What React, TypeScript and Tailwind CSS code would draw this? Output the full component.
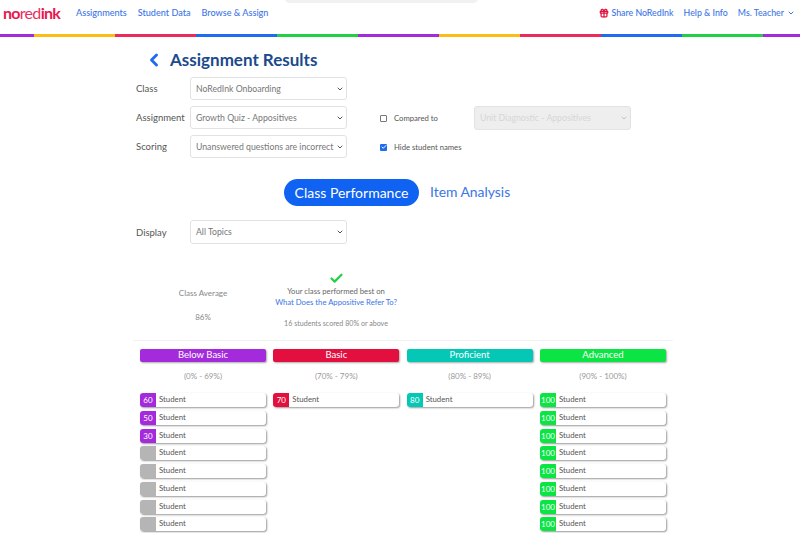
import { ChevronLeft, ChevronDown, Check, Gift } from 'lucide-react';

const FONT = "font-['Lato','Open_Sans',sans-serif]";

const STRIPES = [
  { w: 'w-[34px]', c: 'bg-[#a32bdc]' },
  { w: 'w-[81px]', c: 'bg-[#fbbd14]' },
  { w: 'w-[81px]', c: 'bg-[#ec2a5c]' },
  { w: 'w-[81px]', c: 'bg-[#1f6cf0]' },
  { w: 'w-[81px]', c: 'bg-[#22d045]' },
  { w: 'w-[81px]', c: 'bg-[#a32bdc]' },
  { w: 'w-[81px]', c: 'bg-[#fbbd14]' },
  { w: 'w-[81px]', c: 'bg-[#ec2a5c]' },
  { w: 'w-[81px]', c: 'bg-[#1f6cf0]' },
  { w: 'w-[81px]', c: 'bg-[#22d045]' },
  { w: 'w-[37px]', c: 'bg-[#a32bdc]' },
];

function Select({ value, disabled = false, className = '' }: { value: string; disabled?: boolean; className?: string }) {
  return (
    <div
      className={`flex h-[23px] items-center justify-between rounded-[3px] border border-[#e2e2e2] pl-[5px] pr-[2px] text-[8.7px] ${
        disabled ? 'bg-[#efeeef] text-[#d6d6d6]' : 'bg-white text-[#777]'
      } ${className}`}
    >
      <span className="whitespace-nowrap">{value}</span>
      <ChevronDown size={8} strokeWidth={3} className={disabled ? 'text-[#c4c4c4]' : 'text-[#555]'} />
    </div>
  );
}

function StudentRow({ score, color }: { score?: number; color: string }) {
  return (
    <div className="flex h-[14px] w-[126px] items-stretch rounded-[3px] bg-white shadow-[1px_1px_2px_#999]">
      <div className={`flex w-[16px] shrink-0 items-center justify-center rounded-l-[3px] text-[8px] text-white ${color}`}>
        {score}
      </div>
      <div className="flex items-center pl-[3px] text-[7.8px] text-[#555]">Student</div>
    </div>
  );
}

const COLUMNS = [
  {
    name: 'Below Basic',
    range: '(0% - 69%)',
    bar: 'bg-[#a32bdc]',
    rows: [
      { s: 60, c: 'bg-[#a32bdc]' },
      { s: 50, c: 'bg-[#a32bdc]' },
      { s: 30, c: 'bg-[#a32bdc]' },
      { c: 'bg-[#b5b5b5]' },
      { c: 'bg-[#b5b5b5]' },
      { c: 'bg-[#b5b5b5]' },
      { c: 'bg-[#b5b5b5]' },
      { c: 'bg-[#b5b5b5]' },
    ],
  },
  { name: 'Basic', range: '(70% - 79%)', bar: 'bg-[#e3103f]', rows: [{ s: 70, c: 'bg-[#e3103f]' }] },
  { name: 'Proficient', range: '(80% - 89%)', bar: 'bg-[#04c8b5]', rows: [{ s: 80, c: 'bg-[#04c8b5]' }] },
  {
    name: 'Advanced',
    range: '(90% - 100%)',
    bar: 'bg-[#0be443]',
    rows: Array.from({ length: 8 }, () => ({ s: 100, c: 'bg-[#0be443]' })),
  },
];

export default function App() {
  return (
    <div className={`relative h-[533px] w-[800px] overflow-hidden bg-white ${FONT}`}>
      {/* faint thing peeking in from the top */}
      <div className="absolute left-[285px] top-[-6px] h-[9px] w-[193px] rounded-full bg-[#f1f1f1]" />

      <header className="flex h-[34px] items-center justify-between pb-[9px] pl-[3px] pr-[5px] text-[9.1px] font-medium text-[#3b75e6]">
        <div className="flex items-center">
          <div className="w-[73px] text-[16px] font-bold leading-none tracking-[-0.7px] text-[#e8184f]">
            no<span className="font-normal text-[#e8305f]">red</span>ink
          </div>
          <nav className="flex gap-[11px]">
            <span>Assignments</span>
            <span>Student Data</span>
            <span>Browse &amp; Assign</span>
          </nav>
        </div>
        <div className="flex items-center gap-[10px] text-[8.8px]">
          <span className="flex items-center gap-[2px]">
            <Gift size={10} strokeWidth={3} className="text-[#e3103f]" />
            Share NoRedInk
          </span>
          <span>Help &amp; Info</span>
          <span className="flex items-center gap-[3px]">
            Ms. Teacher
            <ChevronDown size={8} strokeWidth={3} />
          </span>
        </div>
      </header>
      <div className="flex h-[3px]">
        {STRIPES.map((s, i) => (
          <div key={i} className={`${s.w} ${s.c}`} />
        ))}
      </div>

      <main className="pl-[136px]">
        <div className="mt-[11px] flex h-[24px] items-center pl-[11px]">
          <ChevronLeft size={20} strokeWidth={3.5} className="ml-[-3px] text-[#1f6cf0]" />
          <h1 className="ml-[6px] text-[17px] font-bold text-[#1b4a8c]">Assignment Results</h1>
        </div>

        <div className="mt-[5px] flex">
          <div className="flex w-[211px] flex-col gap-[6px]">
            {[
              ['Class', 'NoRedInk Onboarding'],
              ['Assignment', 'Growth Quiz - Appositives'],
              ['Scoring', 'Unanswered questions are incorrect'],
            ].map(([label, value]) => (
              <div key={label} className="flex items-center">
                <span className="w-[54px] pt-[2px] text-[9.5px] text-[#555]">{label}</span>
                <Select value={value} className="w-[157px]" />
              </div>
            ))}
          </div>
          <div className="ml-[33px] mt-[35px] flex flex-col gap-[17px] text-[7.7px] text-[#555]">
            <div className="flex h-[12px] items-center">
              <span className="h-[7px] w-[7px] rounded-[1px] border border-[#777] bg-white" />
              <span className="ml-[7px] w-[80px] pt-[2px]">Compared to</span>
              <Select value="Unit Diagnostic - Appositives" disabled className="h-[24px] w-[157px]" />
            </div>
            <div className="flex h-[12px] items-center">
              <span className="flex h-[7px] w-[7px] items-center justify-center rounded-[1px] bg-[#1f6cf0]">
                <Check size={6} strokeWidth={4} className="text-white" />
              </span>
              <span className="ml-[7px] pt-[2px]">Hide student names</span>
            </div>
          </div>
        </div>

        <div className="mt-[21px] flex items-center pl-[148px]">
          <div className="flex h-[27px] w-[135px] items-center justify-center rounded-full bg-[#0f62f2] text-[14px] text-white">
            Class Performance
          </div>
          <span className="ml-[11px] text-[13.9px] text-[#3b75e6]">Item Analysis</span>
        </div>

        <div className="mt-[14px] flex items-center">
          <span className="w-[54px] pt-[2px] text-[9.5px] text-[#555]">Display</span>
          <Select value="All Topics" className="h-[24px] w-[157px]" />
        </div>
      </main>

      <section className="ml-[133px] mt-[26px] flex h-[71px] w-[540px] border-b border-[#f2f2f2] text-[8px] leading-[11px] text-[#888]">
        <div className="flex w-[140px] flex-col items-center pt-[18px] text-center">
          <span>Class Average</span>
          <span className="mt-[13px]">86%</span>
        </div>
        <div className="ml-[-15px] flex w-[156px] flex-col items-center pt-[1px] text-center">
          <Check size={15} strokeWidth={3.5} className="text-[#22d045]" />
          <span className="text-[7.7px] text-[#666]">Your class performed best on</span>
          <span className="text-[7.7px] text-[#3b75e6]">What Does the Appositive Refer To?</span>
          <span className="mt-[10px] text-[7.1px]">16 students scored 80% or above</span>
        </div>
      </section>

      <section className="ml-[140px] mt-[8px] flex gap-[7.33px]">
        {COLUMNS.map(col => (
          <div key={col.name} className="flex w-[126px] flex-col">
            <div className={`flex h-[13px] items-center justify-center rounded-[2px] text-[9.5px] text-white shadow-[1px_1px_2px_#aaa] ${col.bar}`}>
              {col.name}
            </div>
            <div className="mt-[8px] text-center text-[8px] text-[#999]">{col.range}</div>
            <div className="mt-[11px] flex flex-col gap-[3.76px]">
              {col.rows.map((r, i) => (
                <StudentRow key={i} score={r.s} color={r.c} />
              ))}
            </div>
          </div>
        ))}
      </section>
    </div>
  );
}
